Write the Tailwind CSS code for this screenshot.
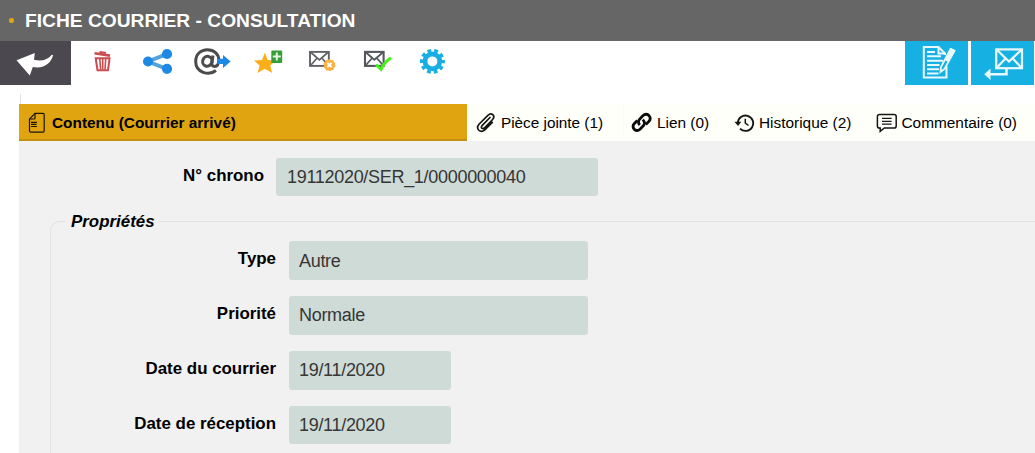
<!DOCTYPE html>
<html lang="fr">
<head>
<meta charset="utf-8">
<title>Fiche courrier</title>
<script src="https://cdn.jsdelivr.net/npm/@tailwindcss/browser@4"></script>
</head>
<body class="w-[1035px] h-[453px] overflow-hidden bg-white text-black font-['Liberation_Sans',Arial,sans-serif]">
<header class="h-[41px] bg-[#666666] flex items-center pl-[9px]">
  <span class="w-[5px] h-[5px] rounded-[2px] bg-[#e0a311]"></span>
  <h1 class="ml-[11px] text-white font-bold text-[19.2px] leading-[41px] whitespace-nowrap">FICHE COURRIER - CONSULTATION</h1>
</header>

<nav class="h-[44px] flex">
  <div class="w-[71px] h-[44px] bg-[#4c484f] mr-1">
    <svg width="71" height="44" viewBox="0 0 71 44"><path d="M16.5 19.3 L34.8 12 L34 18.8 C41 20.8 48 19 51.8 13.8 L53 14 C51.5 22 44 28 32.8 26 L29.8 34.6 Z" fill="#fff"/></svg>
  </div>
  <svg width="55" height="44" viewBox="0 0 55 44"><g fill="none" stroke="#cb4d51"><path d="M19.5 12.2 L35 14.6" stroke-width="2.6"/><path d="M24.5 11 L31 12" stroke-width="2"/><path d="M20.7 17.2 H34.6 L33 29.2 H22.5 Z" stroke-width="2"/><path d="M24.8 18 L25.6 28.5 M27.7 18 V28.5 M30.7 18 L30 28.5" stroke-width="1.6"/></g></svg>
  <svg width="55" height="44" viewBox="0 0 55 44"><path d="M37 13 L18 20.5 L37 28" fill="none" stroke="#52a3dc" stroke-width="4"/><g fill="#1e88e5"><circle cx="18" cy="20.5" r="5"/><circle cx="37" cy="13" r="5.1"/><circle cx="37" cy="27.8" r="5.1"/></g></svg>
  <svg width="55" height="44" viewBox="0 0 55 44"><g fill="none" stroke="#4b4b4b"><path d="M31 29.5 C24 35 10.7 32 10.7 20.5 C10.7 13 16 8.7 22.3 8.7 C29 8.7 33.8 13 33.8 19 C33.8 23.5 31.8 25.4 29.5 25.4 C27.5 25.4 26.6 24 26.9 22 L28 14.5" stroke-width="3"/><ellipse cx="22.3" cy="20.3" rx="4.6" ry="5" stroke-width="3" transform="rotate(20 22.3 20.3)"/></g><path d="M32.5 17.7 H38 V14 L45.7 20.5 L38 27 V23 H32.5 Z" fill="#1e88e5"/></svg>
  <svg width="55" height="44" viewBox="0 0 55 44"><path d="M24.8 11.7 L27.7 19 L36 19.4 L30.2 24.6 L32.2 32 L24.8 27.8 L17.7 32 L19.5 24.6 L14 19.4 L22 19 Z" fill="#fbae17"/><rect x="31.3" y="9.5" width="10.9" height="12.5" rx="1" fill="#369e37"/><path d="M36.8 11.5 V19.5 M32.8 15.5 H40.8" stroke="#e6f4e6" stroke-width="2"/></svg>
  <svg width="55" height="44" viewBox="0 0 55 44"><g fill="none" stroke="#5f6167"><rect x="15" y="10.9" width="18.8" height="14" stroke-width="1.9"/><path d="M16 11.5 L24.4 18.8 L32.8 11.5 M16 24 L21.7 17.5 M32.8 24 L27.2 17.5" stroke-width="1.7"/></g><circle cx="34.4" cy="24.1" r="5.4" fill="#fcb13e" stroke="#fcb13e" stroke-width="1.2" stroke-dasharray="2 1.4"/><path d="M32.3 22 L36.5 26.2 M36.5 22 L32.3 26.2" stroke="#fff" stroke-width="1.8"/></svg>
  <svg width="55" height="44" viewBox="0 0 55 44"><g fill="none" stroke="#55575f"><rect x="15" y="10.9" width="18.6" height="14" stroke-width="2.1"/><path d="M16 11.5 L24.3 18.8 L32.8 11.5 M16 24 L21.7 17.5 M32.8 24 L27.2 17.5" stroke-width="1.8"/></g><path d="M26 23.6 L31 28.3 Q34 21.5 41 16.8" fill="none" stroke="#45f016" stroke-width="3"/></svg>
  <svg width="55" height="44" viewBox="0 0 55 44"><circle cx="27.4" cy="20.4" r="7.4" fill="none" stroke="#18aee2" stroke-width="4.8"/><circle cx="27.4" cy="20.4" r="10.8" fill="none" stroke="#18aee2" stroke-width="3.4" stroke-dasharray="3.8 2.986" stroke-dashoffset="1.9"/></svg>
  <div class="ml-auto mr-px flex gap-[3px]">
    <div class="w-[63px] h-[44px] bg-[#17b0e3]">
      <svg width="63" height="44" viewBox="0 0 63 44"><g fill="none" stroke="#e9f8fd" stroke-width="2"><path d="M40 14 V12.5 L33.5 6 H18.8 V36.6 H41.5 V25"/><path d="M33.5 6 V12.5 H40"/><path d="M22 11 H30 M22 15.3 H36 M22 19.7 H38 M22 24 H34.5 M22 28.3 H34 M22 32.5 H33.5"/></g><path d="M45.5 8 L49.5 10 L39.5 28 L35.5 31 L36 26 Z" fill="#17b0e3" stroke="#e9f8fd" stroke-width="1.8"/><path d="M46 7 L50 9 L43.5 21 L39.5 19 Z" fill="#e9f8fd"/></svg>
    </div>
    <div class="w-[63px] h-[44px] bg-[#17b0e3]">
      <svg width="63" height="44" viewBox="0 0 63 44"><g fill="none" stroke="#e9f8fd"><rect x="25.2" y="8.4" width="25.8" height="18.8" stroke-width="2.2"/><path d="M26 9 L38 20.5 L50.2 9 M26 26.5 L34.5 17.5 M50.2 26.5 L41.8 17.5" stroke-width="2.3"/><path d="M35.5 28 V33.3 H18" stroke-width="2.5"/></g><path d="M13.2 33.3 L19.5 27.5 V39 Z" fill="#e9f8fd"/></svg>
    </div>
  </div>
</nav>

<div class="h-[19px] pt-[9px] pl-5"><div class="w-px h-[10px] bg-[#e6dfe2]"></div></div>

<main class="ml-[19px] h-[349px] bg-[#f1f1f1]">
  <div class="flex h-[37px] bg-[#fffffa] text-[15.4px] leading-[37px] whitespace-nowrap">
    <div class="w-[448px] h-[37px] bg-[#e0a411] border-b-2 border-[#c58f12] flex font-bold">
      <svg class="ml-[9px] mt-[8px]" width="18" height="22" viewBox="0 0 18 22"><g fill="none" stroke="#1d1600" stroke-width="1.2"><path d="M7 1.3 H15 Q16.2 1.3 16.2 2.6 V18.8 Q16.2 20.2 15 20.2 H2.8 Q1.5 20.2 1.5 18.8 V7 Z"/><path d="M7 1.5 V6 Q7 7 6 7 H1.7"/><path d="M3 10.3 H9 M3 12.4 H8.5 M3 14.5 H9"/></g></svg>
      <span class="ml-[6px]">Contenu (Courrier arrivé)</span>
    </div>
    <div class="w-[157px] h-[34px] flex pl-[9px] border-r border-[#fbfbf7]">
      <svg class="mt-[8px]" width="20" height="22" viewBox="0 0 20 22"><path d="M14 5.5 L6.3 13.3 Q4.6 15.3 6 16.4 Q7.3 17.3 8.9 15.6 L16.6 7.5 Q19 4.6 16.8 2.7 Q14.5 1 11.9 3.3 L3.2 12 Q.3 15.3 2.6 18 Q5.5 20.8 8.8 17.8 L16.3 10.3" fill="none" stroke="#151515" stroke-width="1.7" stroke-linecap="round"/></svg>
      <span class="ml-[5px] text-[15.3px]">Pièce jointe (1)</span>
    </div>
    <div class="w-[103px] h-[34px] flex pl-[7px]">
      <svg class="mt-[8px]" width="22" height="22" viewBox="0 0 22 22"><g fill="none" stroke="#0c0c0c" stroke-width="2.8"><path d="M8.8 13 Q6.3 10 8.5 7.3 L11.8 3.8 Q14.8 1 17.8 3.4 Q20.5 6.3 18 9.3 L14.8 12.4"/><path d="M11.8 7.6 Q14.8 10.8 12.5 13.5 L9 17.2 Q6.2 19.8 3.3 17.4 Q.9 14.5 3.2 11.7 L6.3 8.6"/></g></svg>
      <span class="ml-[4px]">Lien (0)</span>
    </div>
    <div class="w-[142px] h-[34px] flex pl-[7px]">
      <svg class="mt-[8px]" width="21" height="22" viewBox="0 0 21 22"><path d="M3.8 11 A7.7 7.7 0 1 1 6 16.6" fill="none" stroke="#151515" stroke-width="1.9"/><path d="M.5 9.7 H7.4 L4 14 Z" fill="#151515"/><path d="M11.3 6.7 V11.2 L14.5 13.5" fill="none" stroke="#151515" stroke-width="1.5"/></svg>
      <span class="ml-[4px]">Historique (2)</span>
    </div>
    <div class="h-[34px] flex pl-[7px]">
      <svg class="mt-[8px]" width="22" height="22" viewBox="0 0 22 22"><path d="M3.6 2.5 H18 Q20.2 2.5 20.2 4.6 V13.9 Q20.2 16 18 16 H8.3 L4.2 19.4 V16 H3.6 Q1.4 16 1.4 13.9 V4.6 Q1.4 2.5 3.6 2.5 Z" fill="none" stroke="#151515" stroke-width="1.5"/><path d="M6 6.4 H15.6 M6 9.3 H15.6 M6 12.2 H15.6" stroke="#151515" stroke-width="1.3"/></svg>
      <span class="ml-[3.5px]">Commentaire (0)</span>
    </div>
  </div>

  <div class="flex pt-[17px]">
    <label class="w-[245px] text-right font-bold text-[16.9px] leading-[36px]">N° chrono</label>
    <div class="ml-[12px] w-[322px] h-[38px] rounded-[3px] bg-[#cfdbd6] text-[#363636] pl-[11px] text-[18px] tracking-[-0.3px] leading-[38px] whitespace-nowrap">19112020/SER_1/0000000040</div>
  </div>

  <fieldset class="mt-[13px] ml-[31px] h-[244px] border border-r-0 border-b-0 border-[#e6e1e2] rounded-tl-[10px]">
    <legend class="ml-[15px] pl-[5px] pr-[4px] h-[24px] leading-[25px] font-bold italic text-[16.9px]">Propriétés</legend>
    <div class="pt-[8px] flex flex-col gap-[16px]">
      <div class="flex"><label class="w-[225px] text-right font-bold text-[16.9px] leading-[36px]">Type</label><div class="ml-[13px] w-[299px] h-[39px] rounded-[3px] bg-[#cfdbd6] text-[#363636] pl-[10px] text-[18px] tracking-[-0.3px] leading-[40px]">Autre</div></div>
      <div class="flex"><label class="w-[225px] text-right font-bold text-[16.9px] leading-[36px]">Priorité</label><div class="ml-[13px] w-[299px] h-[39px] rounded-[3px] bg-[#cfdbd6] text-[#363636] pl-[10px] text-[18px] tracking-[-0.3px] leading-[39px]">Normale</div></div>
      <div class="flex"><label class="w-[225px] text-right font-bold text-[16.9px] leading-[36px]">Date du courrier</label><div class="ml-[13px] w-[162px] h-[39px] rounded-[3px] bg-[#cfdbd6] text-[#363636] pl-[10px] text-[18px] tracking-[-0.3px] leading-[39px]">19/11/2020</div></div>
      <div class="flex"><label class="w-[225px] text-right font-bold text-[16.9px] leading-[36px]">Date de réception</label><div class="ml-[13px] w-[162px] h-[38px] rounded-[3px] bg-[#cfdbd6] text-[#363636] pl-[10px] text-[18px] tracking-[-0.3px] leading-[39px]">19/11/2020</div></div>
    </div>
  </fieldset>
</main>
</body>
</html>
